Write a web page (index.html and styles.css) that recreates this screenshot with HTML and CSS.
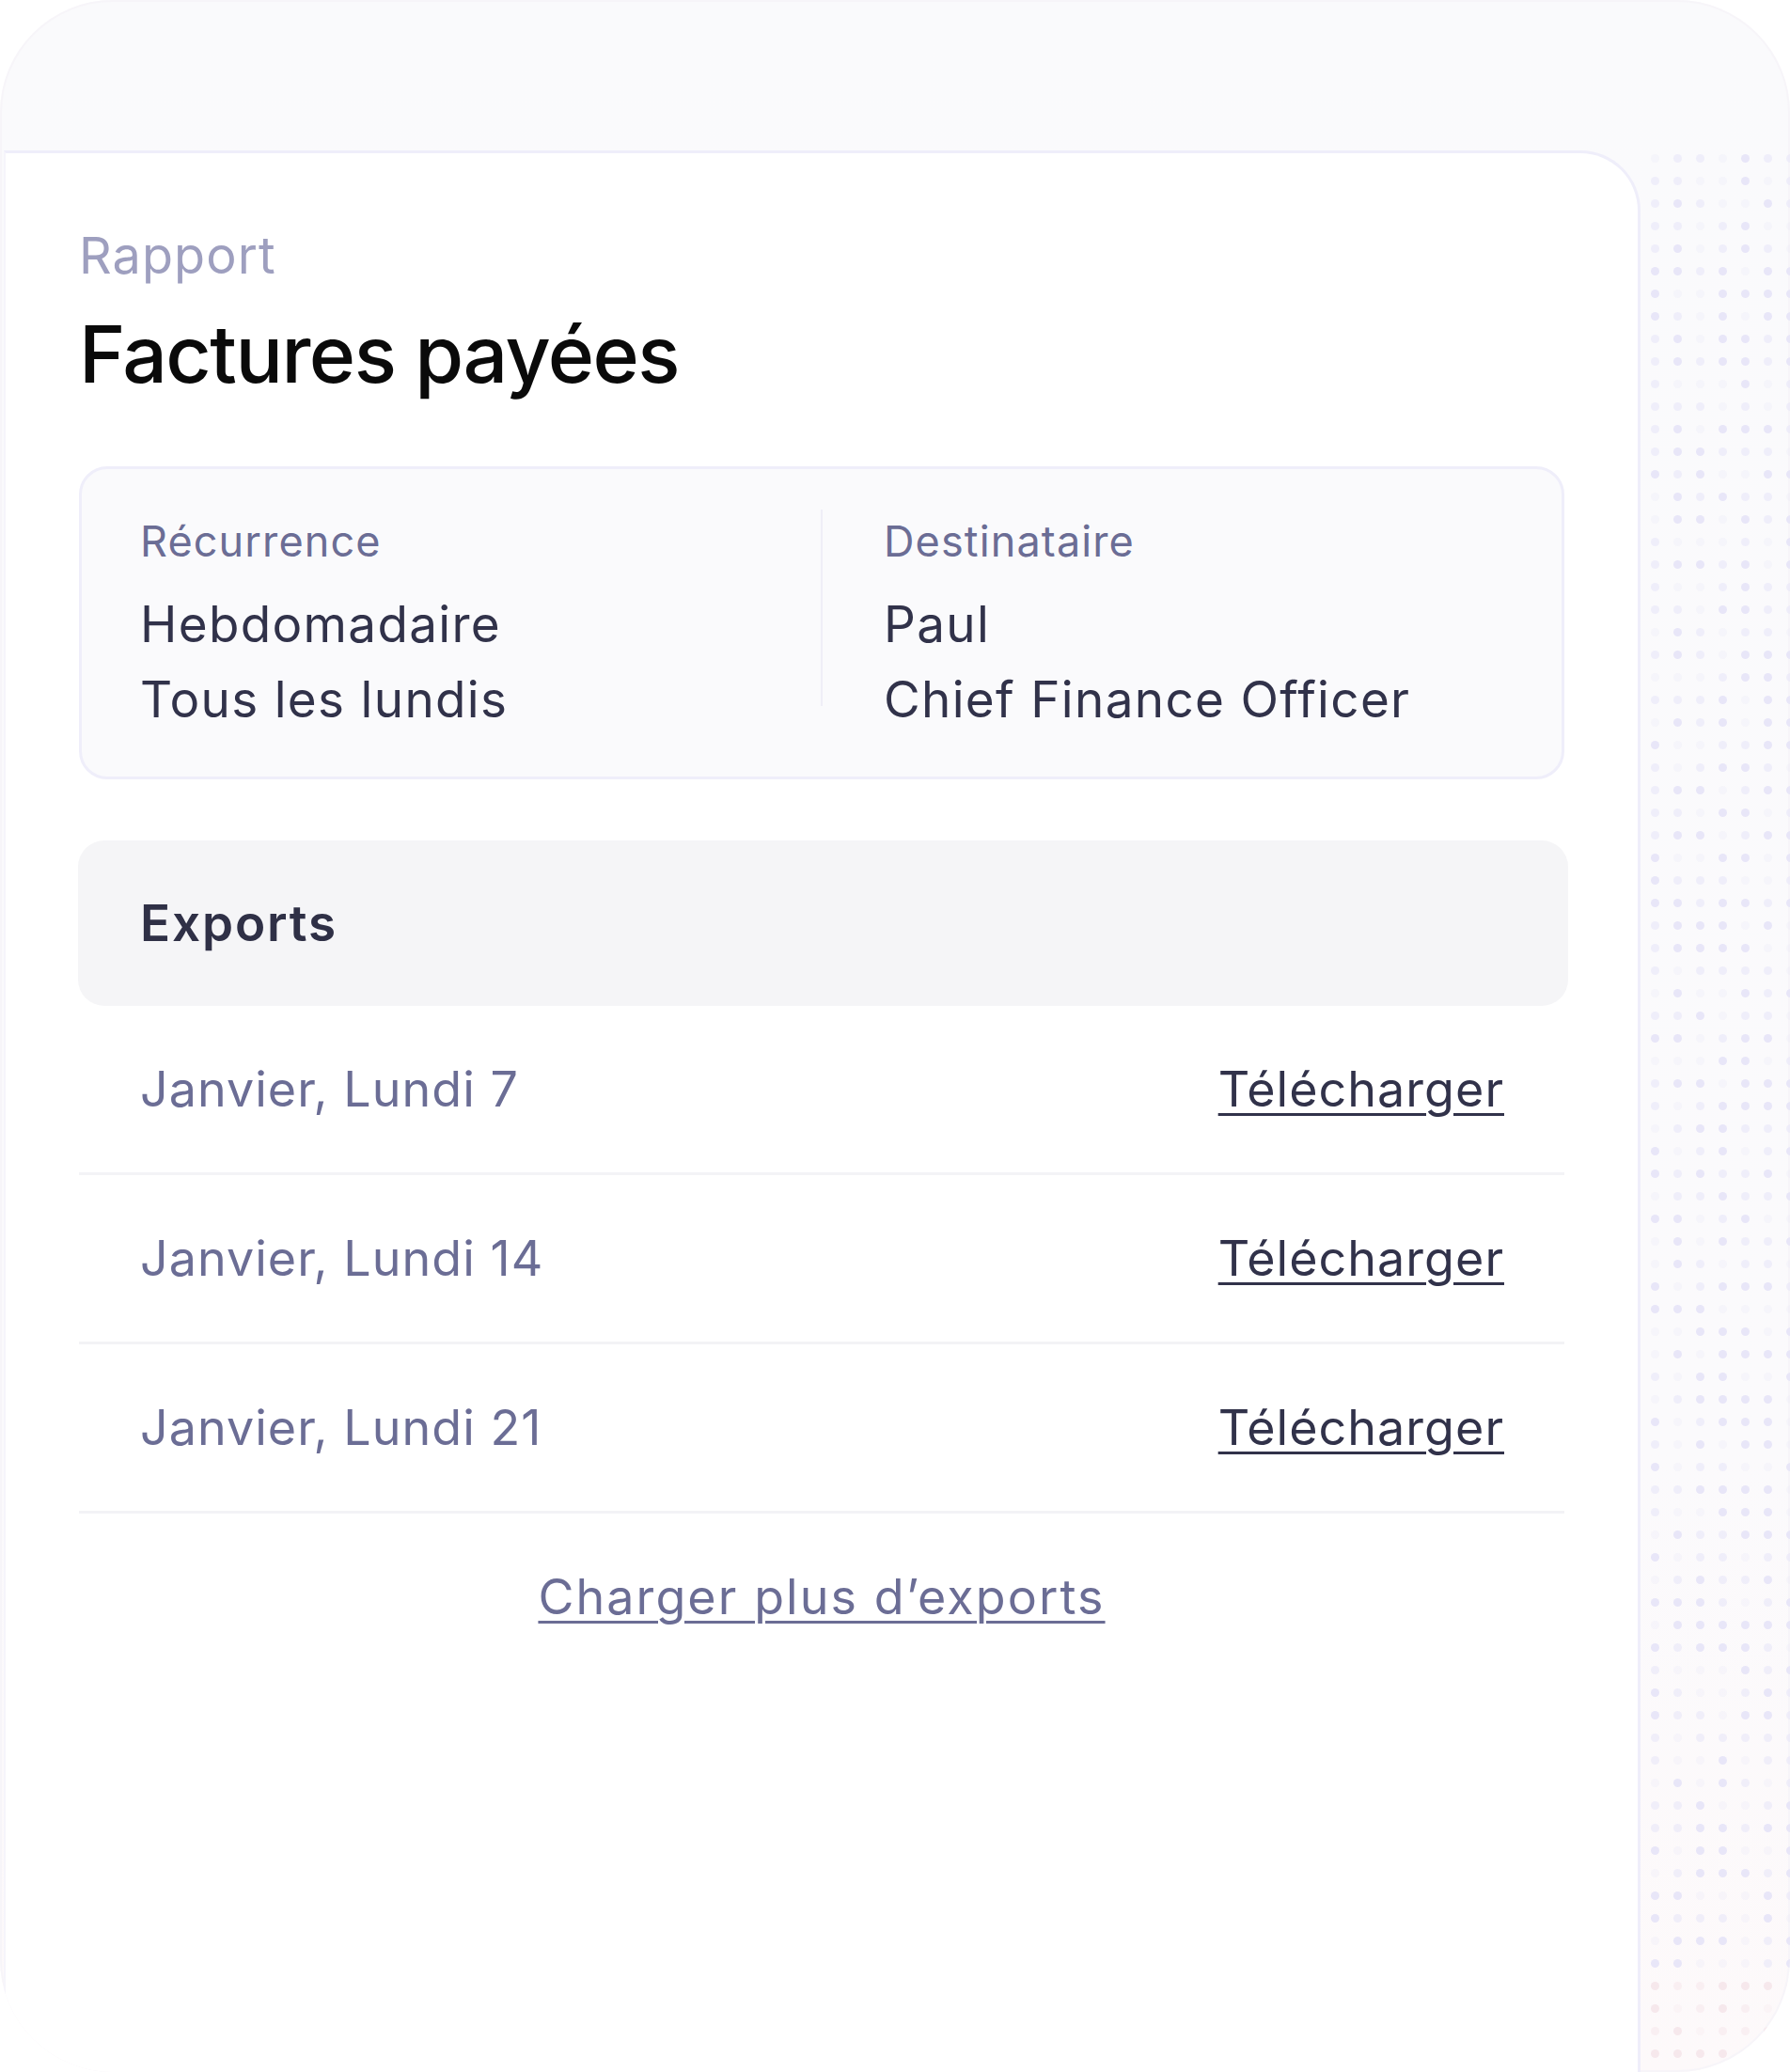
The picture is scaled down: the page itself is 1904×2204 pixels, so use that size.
FILE: index.html
```html
<!DOCTYPE html>
<html lang="fr">

<head>
    <meta charset="UTF-8" />
    <meta name="viewport" content="width=device-width, initial-scale=1.0" />
    <title>Factures payées</title>
    <link rel="stylesheet" href="styles.css">
</head>

<body>
    <div class="frame">
        <div class="dots" id="dots"></div>

        <section class="card">
            <p class="eyebrow">Rapport</p>
            <h1 class="title">Factures payées</h1>

            <div class="summary">
                <div class="summary-col">
                    <span class="summary-label">Récurrence</span>
                    <span class="summary-value">Hebdomadaire</span>
                    <span class="summary-value">Tous les lundis</span>
                </div>
                <div class="summary-divider"></div>
                <div class="summary-col">
                    <span class="summary-label">Destinataire</span>
                    <span class="summary-value">Paul</span>
                    <span class="summary-value">Chief Finance Officer</span>
                </div>
            </div>

            <div class="exports-head">Exports</div>
            <ul class="exports">
                <li class="export-row">
                    <span class="export-date">Janvier, Lundi 7</span>
                    <a href="#" class="export-link">Télécharger</a>
                </li>
                <li class="export-row">
                    <span class="export-date">Janvier, Lundi 14</span>
                    <a href="#" class="export-link">Télécharger</a>
                </li>
                <li class="export-row">
                    <span class="export-date">Janvier, Lundi 21</span>
                    <a href="#" class="export-link">Télécharger</a>
                </li>
            </ul>

            <div class="more">
                <a href="#">Charger plus d’exports</a>
            </div>
        </section>
    </div>

    <script>
        // decorative dot field behind the card, faded at random
        const field = document.getElementById("dots");
        let seed = 11;
        function rnd() {
            seed = (seed * 16807) % 2147483647;
            return seed / 2147483647;
        }
        const cols = 7;
        const rows = 86;
        for (let i = 0; i < cols * rows; i++) {
            const dot = document.createElement("span");
            const r = rnd();
            dot.style.opacity = r < 0.3 ? 0.25 : r < 0.6 ? 0.6 : 1;
            if (Math.floor(i / cols) > rows - 6) dot.classList.add("warm");
            field.appendChild(dot);
        }
    </script>
</body>

</html>
```

FILE: styles.css
```css
:root {
    --frame-bg: #fafafc;
    --line: #efeefa;
    --line-soft: #f3f3f6;
    --txt-dark: #31324a;
    --txt-muted: #6b6d95;
    --txt-faint: #9e9fbf;
}

* {
    box-sizing: border-box;
}

body {
    margin: 0;
    background: #fff;
    font-family: "Inter", "DejaVu Sans", sans-serif;
}

.frame {
    position: relative;
    width: 1904px;
    height: 2204px;
    padding-top: 160px;
    border-radius: 120px;
    overflow: hidden;
    background: linear-gradient(180deg, #fafafc 0%, #fbfafc 70%, #fdf9fa 100%);
    box-shadow: inset 0 0 0 2px #f7f5f9;
}

.dots {
    position: absolute;
    left: 1748px;
    top: 156px;
    right: 0;
    bottom: 0;
    display: grid;
    grid-template-columns: repeat(7, 24px);
    grid-auto-rows: 24px;
}

.dots span {
    width: 9px;
    height: 9px;
    margin: auto;
    border-radius: 50%;
    background: #e8e6f8;
}

.dots span.warm {
    background: #f6e8ec;
}

.card {
    position: relative;
    z-index: 1;
    width: 1741px;
    min-height: 2100px;
    margin-left: 4px;
    padding: 76px 78px 0;
    background: #fff;
    border-top: 3px solid var(--line);
    border-right: 3px solid var(--line);
    border-left: 2px solid #f6f5fb;
    border-top-right-radius: 64px;
}

.eyebrow {
    margin: 0;
    font-size: 54px;
    line-height: 66px;
    font-weight: 400;
    letter-spacing: 0.02em;
    color: var(--txt-faint);
}

.title {
    margin: 22px 0 0;
    font-size: 84px;
    line-height: 100px;
    font-weight: 500;
    letter-spacing: -1.5px;
    color: #0a0a0a;
}

.summary {
    margin-top: 69px;
    display: grid;
    grid-template-columns: 1fr 2px 1fr;
    column-gap: 65px;
    padding: 43px 62px 42px;
    background: var(--frame-bg);
    border: 3px solid var(--line);
    border-radius: 30px;
}

.summary-col {
    display: flex;
    flex-direction: column;
    padding-top: 10px;
}

.summary-label {
    margin-bottom: 24px;
    font-size: 45px;
    line-height: 48px;
    letter-spacing: 0.025em;
    color: var(--txt-muted);
}

.summary-value {
    font-size: 53px;
    line-height: 80px;
    letter-spacing: 0.025em;
    color: var(--txt-dark);
}

.summary-divider {
    align-self: start;
    height: 209px;
    background: #efeef7;
}

.exports-head {
    margin: 65px -4px 0 -1px;
    height: 176px;
    display: flex;
    align-items: center;
    padding-left: 66px;
    background: #f5f5f7;
    border-radius: 28px;
    font-size: 53px;
    font-weight: 600;
    letter-spacing: 0.035em;
    color: #2f3046;
}

.exports {
    list-style: none;
    margin: 0;
    padding: 0;
}

.export-row {
    height: 180px;
    display: flex;
    align-items: center;
    justify-content: space-between;
    padding: 0 64px 0 65px;
    border-bottom: 3px solid var(--line-soft);
    font-size: 52px;
    line-height: 64px;
    letter-spacing: 0.02em;
}

.export-date {
    color: var(--txt-muted);
}

.export-link,
.more a {
    color: var(--txt-dark);
    text-decoration: underline;
    text-decoration-thickness: 3px;
    text-underline-offset: 7px;
}

.more {
    padding-top: 57px;
    text-align: center;
    font-size: 52px;
    line-height: 64px;
    letter-spacing: 0.04em;
}

.more a {
    color: var(--txt-muted);
}
```
